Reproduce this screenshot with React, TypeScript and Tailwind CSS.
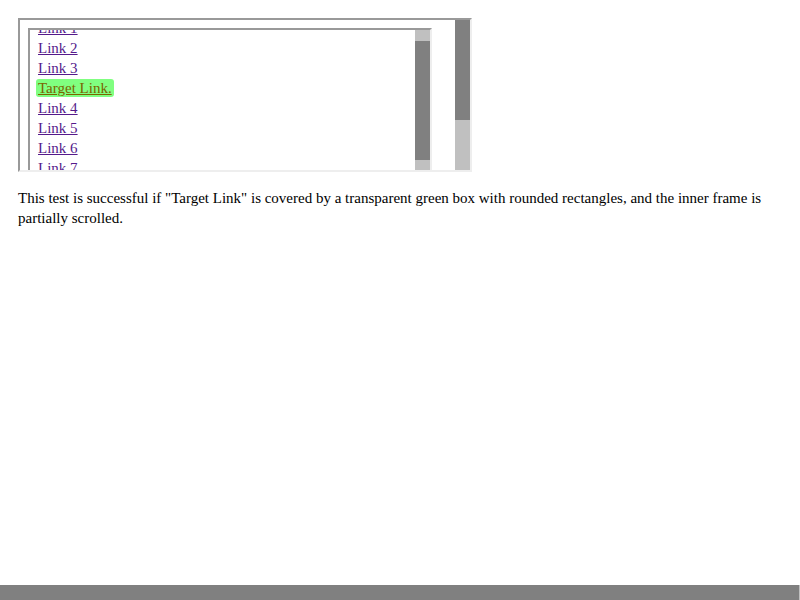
const LINKS_BEFORE = ['Link 1', 'Link 2', 'Link 3']
const LINKS_AFTER = ['Link 4', 'Link 5', 'Link 6', 'Link 7', 'Link 8', 'Link 9']

function FakeScrollbar({ before, thumb }: { before: number; thumb: number }) {
  return (
    <div className="flex w-[15px] shrink-0 flex-col bg-[#c0c0c0]">
      <div style={{ height: before }} />
      <div className="bg-[#808080]" style={{ height: thumb }} />
    </div>
  )
}

function InnerFrame() {
  return (
    <div className="flex h-[154px] w-[404px] border-2 border-t-[#999] border-l-[#999] border-r-[#eee] border-b-[#eee]">
      <div className="flex-1 overflow-hidden">
        <div className="-mt-[12px] pl-[8px] leading-[20px]">
          {LINKS_BEFORE.map(l => (
            <div key={l}>
              <a href="#" className="text-[#551a8b] underline">{l}</a>
            </div>
          ))}
          <div>
            <span className="-ml-[2px] inline-block rounded-[3px] bg-[#80ff80] pl-[2px] pr-[2px] leading-[18px]">
              <a href="#" className="text-[#7a6400] underline">Target Link.</a>
            </span>
          </div>
          {LINKS_AFTER.map(l => (
            <div key={l}>
              <a href="#" className="text-[#551a8b] underline">{l}</a>
            </div>
          ))}
        </div>
      </div>
      <FakeScrollbar before={11} thumb={119} />
    </div>
  )
}

export default function App() {
  return (
    <div className="flex h-screen flex-col bg-white text-[15px] text-black" style={{ fontFamily: '"Liberation Serif", serif' }}>
      <div className="pl-[18px] pr-[18px] pt-[18px]">
        {/* outer frame */}
        <div className="flex h-[154px] w-[454px] border-2 border-t-[#999] border-l-[#999] border-r-[#eee] border-b-[#eee]">
          <div className="flex-1 overflow-hidden pl-[8px] pt-[8px]">
            <InnerFrame />
          </div>
          <FakeScrollbar before={0} thumb={100} />
        </div>
        <p className="mt-[16px] leading-[20px]">
          This test is successful if "Target Link" is covered by a transparent green box with rounded rectangles, and the inner frame is partially scrolled.
        </p>
      </div>
      <div className="mt-auto h-[15px] border-r border-r-[#c0c0c0] bg-[#808080]" />
    </div>
  )
}
